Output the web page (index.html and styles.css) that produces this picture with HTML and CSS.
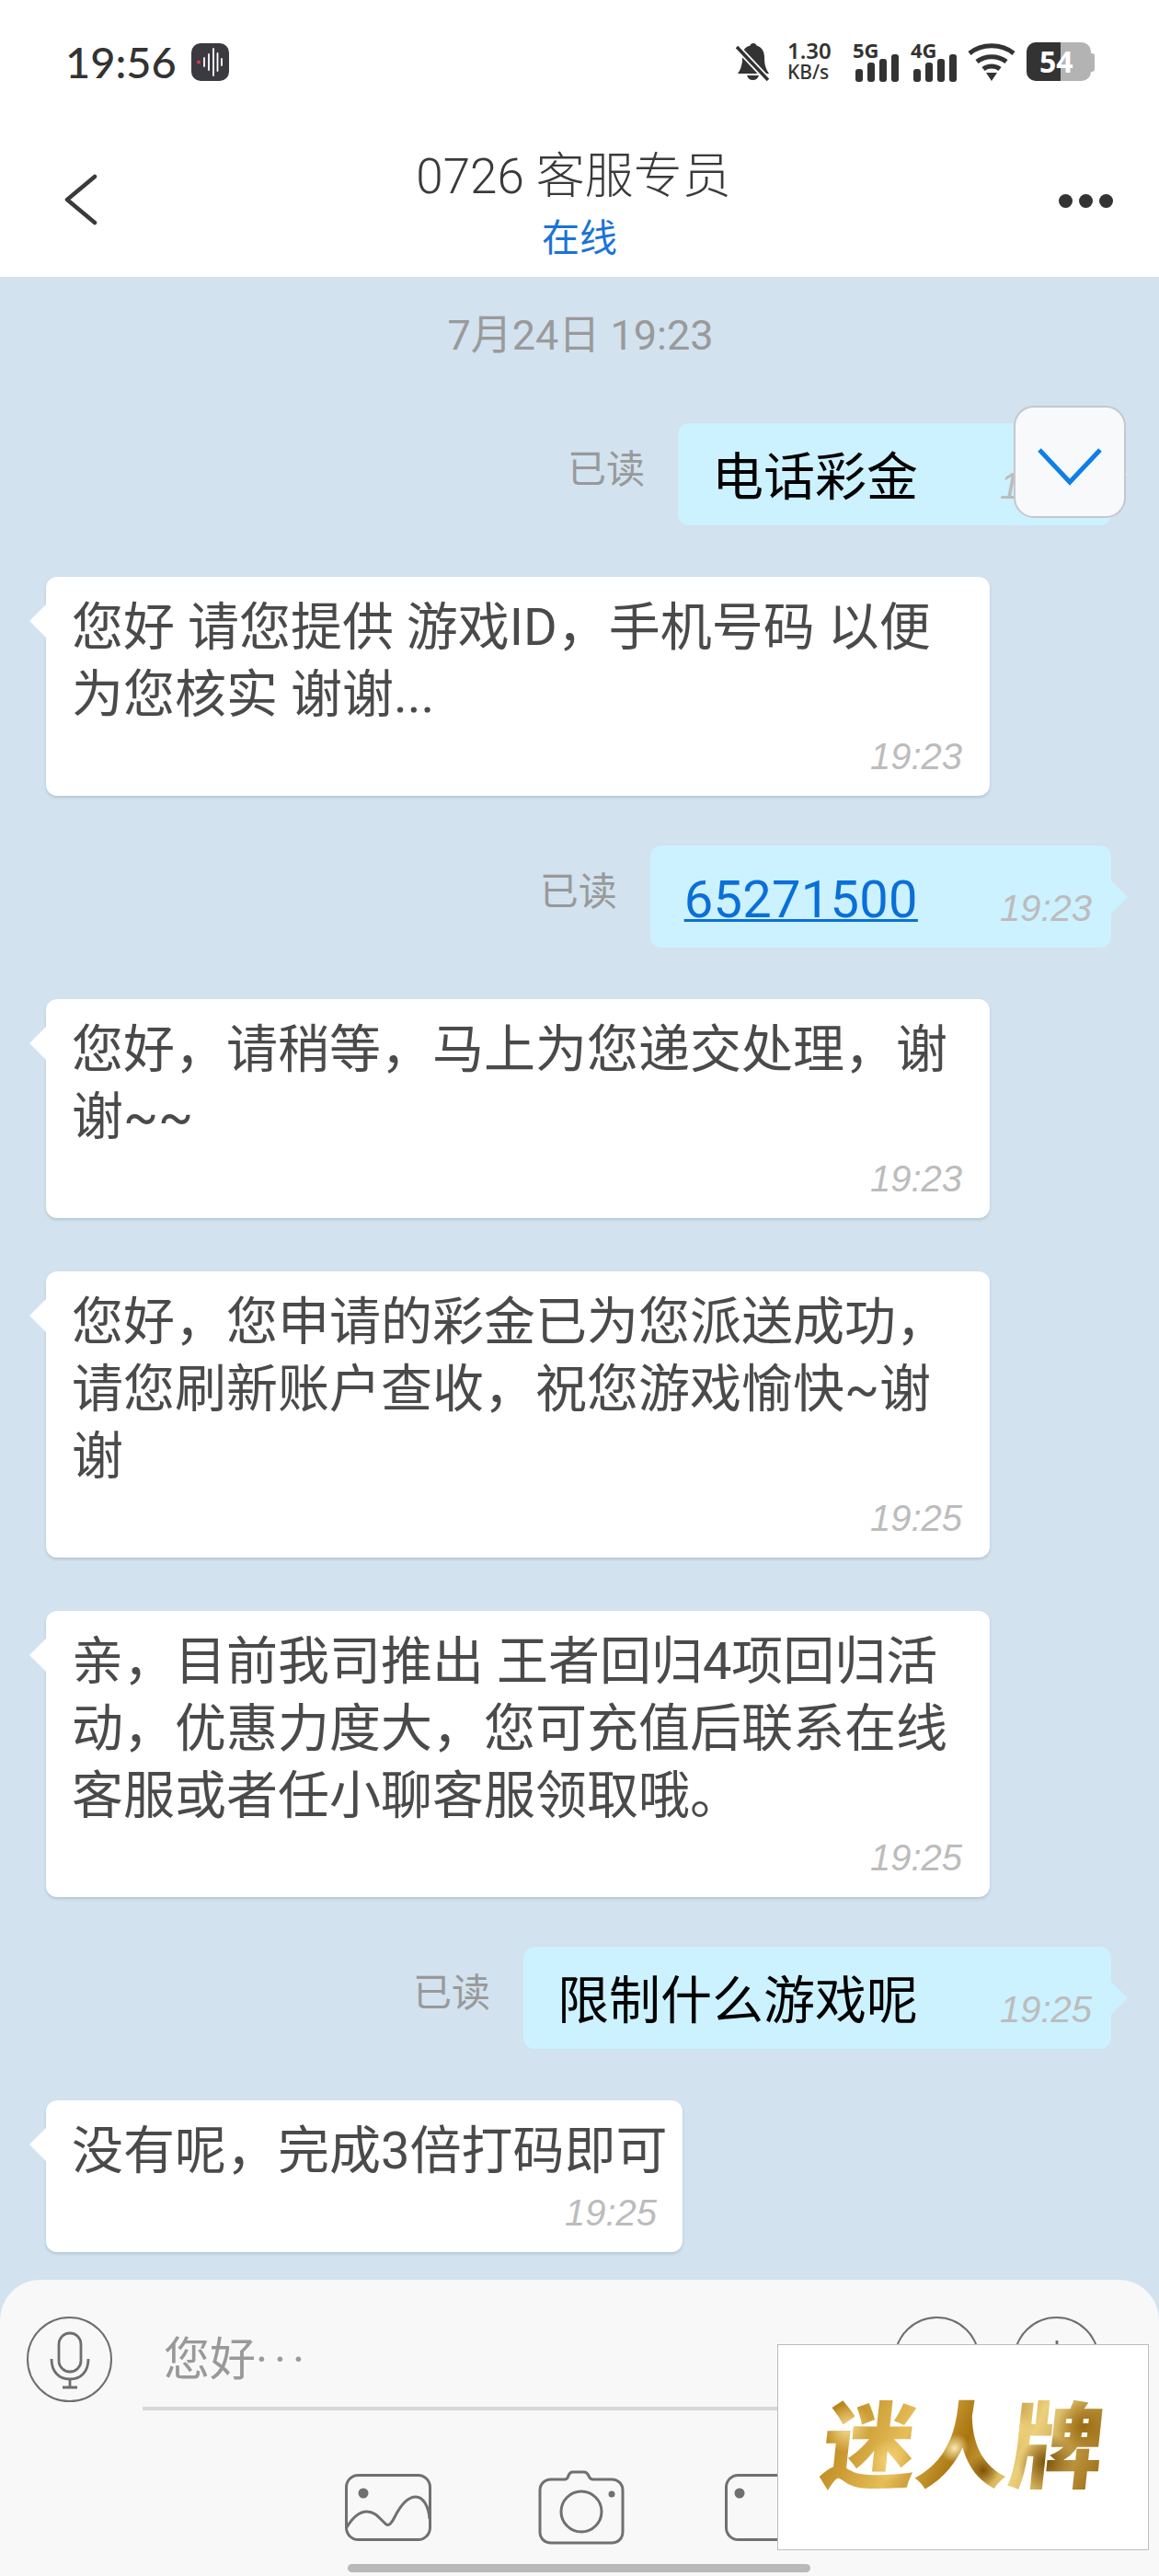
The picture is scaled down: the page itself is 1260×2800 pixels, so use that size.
FILE: index.html
```html
<!doctype html>
<html lang="zh-CN">
<head>
  <meta charset="utf-8" />
  <meta name="viewport" content="width=device-width,initial-scale=1" />
  <title>0726 客服专员</title>
  <link rel="stylesheet" href="styles.css">
</head>
<body>

<div class="status-bar">
  <div class="status-left">
    <span class="clock">19:56</span>
    <span class="rec-badge">
      <svg width="41" height="41" viewBox="0 0 41 41">
        <circle cx="8" cy="20.5" r="2" fill="#e0344f"/>
        <path d="M14 16v9M19 12v17M24 6v29M28.500 11v19M33 17v7" stroke="#fff" stroke-width="1.800" stroke-linecap="round"/>
      </svg>
    </span>
  </div>
  <div class="status-right">
    <svg class="bell" width="37" height="42" viewBox="0 0 37 42">
      <path d="M19 1c2 0 3 1 3.500 2.500C28 5 31 10 31 16c0 7 1 12 5 18H2c3-4 4-8 5-13V15c0-6 3-10 8.500-11.500C16 2 17 1 19 1zM12 36h13c-1 3-3 5-6.500 5S13 39 12 36z" fill="#333"/>
      <path d="M1 5l34 36" stroke="#fff" stroke-width="7"/>
      <path d="M1 5l34 36" stroke="#333" stroke-width="3.500"/>
    </svg>
    <div class="speed"><span>1.30</span><span class="speed-unit">KB/s</span></div>
    <div class="signal">
      <span class="net-label">5G</span>
      <svg width="48" height="30" viewBox="0 0 48 30"><g fill="#333"><rect x="0" y="16" width="8" height="14" rx="3"/><rect x="13" y="9" width="8" height="21" rx="3"/><rect x="26" y="5" width="8" height="25" rx="3"/><rect x="39" y="0" width="8" height="30" rx="3"/></g></svg>
    </div>
    <div class="signal">
      <span class="net-label">4G</span>
      <svg width="48" height="30" viewBox="0 0 48 30"><g fill="#333"><rect x="0" y="16" width="8" height="14" rx="3"/><rect x="13" y="9" width="8" height="21" rx="3"/><rect x="26" y="5" width="8" height="25" rx="3"/><rect x="39" y="0" width="8" height="30" rx="3"/></g></svg>
    </div>
    <svg class="wifi" width="52" height="42" viewBox="0 0 52 42">
      <g fill="none" stroke="#333" stroke-width="5">
        <path d="M2 12C15 1 37 1 50 12"/>
        <path d="M10 21c9-7 23-7 32 0"/>
        <path d="M17 29c5-4 13-4 18 0"/>
      </g>
      <path d="M20 33h12l-6 9z" fill="#333"/>
    </svg>
    <div class="battery"><span class="battery-body"><span class="battery-fill"></span><span class="battery-num">54</span></span></div>
  </div>
</div>

<div class="top-bar">
  <svg class="back" width="36" height="56" viewBox="0 0 36 56">
    <path d="M33 3L3 28l30 25" fill="none" stroke="#3a3a3a" stroke-width="4.500" stroke-linecap="round" stroke-linejoin="round"/>
  </svg>
  <div class="title-wrap">
    <div class="title">0726 客服专员</div>
    <div class="subtitle">在线</div>
  </div>
  <div class="more"><i></i><i></i><i></i></div>
</div>

<div class="chat">
  <div class="date">7月24日 19:23</div>

  <div class="row sent first">
    <span class="read">已读</span>
    <div class="bubble out"><span class="txt">电话彩金</span><span class="time">19:23</span></div>
  </div>

  <div class="bubble in">
    <div class="txt">您好 请您提供 游戏ID，手机号码 以便为您核实 谢谢...</div>
    <div class="time">19:23</div>
  </div>

  <div class="row sent">
    <span class="read">已读</span>
    <div class="bubble out"><a class="txt link">65271500</a><span class="time">19:23</span></div>
  </div>

  <div class="bubble in">
    <div class="txt">您好，请稍等，马上为您递交处理，谢谢~~</div>
    <div class="time">19:23</div>
  </div>

  <div class="bubble in">
    <div class="txt">您好，您申请的彩金已为您派送成功，请您刷新账户查收，祝您游戏愉快~谢谢</div>
    <div class="time">19:25</div>
  </div>

  <div class="bubble in">
    <div class="txt">亲，目前我司推出 王者回归4项回归活动，优惠力度大，您可充值后联系在线客服或者任小聊客服领取哦。</div>
    <div class="time">19:25</div>
  </div>

  <div class="row sent">
    <span class="read">已读</span>
    <div class="bubble out"><span class="txt">限制什么游戏呢</span><span class="time">19:25</span></div>
  </div>

  <div class="bubble in short">
    <div class="txt">没有呢，完成3倍打码即可</div>
    <div class="time">19:25</div>
  </div>

  <button class="scroll-btn">
    <svg width="72" height="42" viewBox="0 0 72 42"><path d="M3 3l33 35L69 3" fill="none" stroke="#0f7fe6" stroke-width="5"/></svg>
  </button>
</div>

<div class="composer">
  <div class="input-row">
    <span class="circle-btn">
      <svg width="60" height="70" viewBox="0 0 60 70">
        <g fill="none" stroke="#6e6e6e" stroke-width="2.800">
          <rect x="18" y="6" width="24" height="42" rx="12"/>
          <path d="M10 34c0 14 8 22 20 22s20-8 20-22"/>
          <path d="M30 56v8M22 65h16"/>
        </g>
      </svg>
    </span>
    <div class="input-box">您好<span class="dots">···</span></div>
    <span class="circle-btn">
      <svg width="60" height="60" viewBox="0 0 60 60"><g fill="#6e6e6e"><circle cx="20" cy="20" r="3"/><circle cx="40" cy="20" r="3"/></g></svg>
    </span>
    <span class="circle-btn">
      <svg width="50" height="50" viewBox="0 0 50 50"><path d="M25 4v42M4 25h42" stroke="#6e6e6e" stroke-width="2.800"/></svg>
    </span>
  </div>
  <div class="tools">
    <svg width="94" height="73" viewBox="0 0 94 73">
      <g fill="none" stroke="#707070" stroke-width="3">
        <rect x="1.500" y="1.500" width="91" height="70" rx="13"/>
        <path d="M2 58c6-10 14-17 22-17 9 0 14 8 21 14 3 2 6-2 9-8 6-12 14-22 23-22 8 0 14 10 15 24"/>
      </g>
      <circle cx="20" cy="21" r="5.500" fill="#707070"/>
    </svg>
    <svg width="94" height="81" viewBox="0 0 94 81">
      <g fill="none" stroke="#707070" stroke-width="3">
        <path d="M14 10h15c2 0 3-1 4-4 1-3 3-4 5-4h12c3 0 4 2 5 4 1 3 2 4 5 4h20c7 0 12 5 12 12v45c0 7-5 12-12 12H14c-7 0-12-5-12-12V22c0-7 5-12 12-12z"/>
        <circle cx="47" cy="45" r="22"/>
      </g>
      <circle cx="80" cy="26" r="3.500" fill="#707070"/>
    </svg>
    <svg class="tool-last" width="94" height="73" viewBox="0 0 94 73">
      <g fill="none" stroke="#707070" stroke-width="3">
        <rect x="1.500" y="1.500" width="91" height="70" rx="13"/>
      </g>
      <circle cx="16" cy="21" r="5.500" fill="#707070"/>
    </svg>
  </div>
  <div class="home-bar"></div>
</div>

<div class="stamp"><span class="stamp-text">迷人牌</span></div>

</body>
</html>
```
FILE: styles.css
```css
*{box-sizing:border-box;}
html,body{margin:0;padding:0;}
body{width:1260px;height:2800px;overflow:hidden;position:relative;display:flex;flex-direction:column;background:#d2e2ef;font-family:Roboto,"Noto Sans CJK SC",sans-serif;color:#333;}

.status-bar{height:134px;background:#fff;display:flex;justify-content:space-between;align-items:flex-start;padding:46px 70px 0 71px;}
.status-left{display:flex;align-items:center;gap:16px;height:42px;}
.clock{font-family:"Lato","Noto Sans",sans-serif;font-size:47px;font-weight:500;color:#333;line-height:42px;}
.rec-badge{width:41px;height:41px;border-radius:10px;background:#3a3a40;display:block;}
.rec-badge svg{display:block;}
.status-right{display:flex;align-items:flex-start;height:42px;}
.bell{display:block;margin-right:19px;}
.speed{width:52px;margin-right:19px;display:flex;flex-direction:column;align-items:flex-start;font-family:"Noto Sans",sans-serif;font-weight:600;font-size:24px;line-height:24px;color:#333;margin-top:-3px;white-space:nowrap;}
.speed-unit{font-size:21px;font-weight:500;line-height:22px;}
.signal{position:relative;width:48px;height:42px;margin-right:15px;}
.signal svg{position:absolute;left:3px;top:13px;}
.net-label{position:absolute;left:0;top:-4px;font-family:"Noto Sans",sans-serif;font-weight:700;font-size:22px;line-height:24px;color:#333;}
.wifi{display:block;margin:0 12px 0 -1px;}
.battery{position:relative;width:74px;height:42px;}
.battery::after{content:"";position:absolute;right:0;top:12px;width:5px;height:20px;background:#b3b3b3;border-radius:0 3px 3px 0;}
.battery-body{position:absolute;left:0;top:0;width:70px;height:42px;background:#b3b3b3;border-radius:10px;overflow:hidden;}
.battery-fill{position:absolute;left:0;top:0;bottom:0;width:37px;background:#333;}
.battery-num{position:absolute;left:14px;top:0;font-family:"Noto Sans",sans-serif;font-weight:700;font-size:32px;line-height:42px;color:#fff;}

.top-bar{height:167px;background:#fff;position:relative;display:flex;justify-content:center;}
.back{position:absolute;left:70px;top:55px;}
.title-wrap{text-align:center;padding-top:28px;margin-left:-3px;}
.title{font-size:53px;line-height:60px;color:#3a3a3a;font-weight:300;padding-right:10px;}
.subtitle{font-size:41px;line-height:50px;color:#1a73d9;margin-top:12px;margin-left:3px;}
.more{position:absolute;left:1151px;top:77px;display:flex;gap:7px;}
.more i{display:block;width:15px;height:15px;border-radius:50%;background:#333;}

.chat{flex:1;position:relative;display:flex;flex-direction:column;align-items:flex-start;padding:0 50px;}
.date{align-self:center;margin-top:33px;margin-left:2px;font-size:45px;line-height:62px;color:#9a9a9a;}
.row{display:flex;align-items:center;justify-content:flex-end;width:1158px;}
.row.first{margin-top:64px;}
.read{font-size:42px;line-height:50px;color:#999;margin-right:36px;margin-top:-10px;}

.bubble{position:relative;border-radius:12px;}
.bubble.in{width:1026px;background:#fff;padding:0 28px;margin-top:58px;box-shadow:0 2px 3px rgba(90,110,130,.25);}
.bubble.in.short{width:692px;padding-right:20px;}
.bubble.in::before{content:"";position:absolute;left:-18px;top:30px;width:0;height:0;border-top:18px solid transparent;border-bottom:18px solid transparent;border-right:18px solid #fff;}
.bubble.in .txt{font-size:56px;line-height:73px;color:#4a4a4a;padding-top:19px;}
.bubble.in.short .txt{white-space:nowrap;}
.bubble.in .time{text-align:right;padding-right:2px;height:73px;line-height:61px;}
.bubble.in.short .time{padding-right:8px;}
.time{font-family:"Liberation Sans",sans-serif;font-style:italic;font-size:40px;color:#bcbcbc;}

.bubble.out{display:flex;align-items:center;height:111px;background:#ccf1ff;padding:0 21px 0 37px;}
.bubble.out::after{content:"";position:absolute;right:-18px;top:38px;width:0;height:0;border-top:18px solid transparent;border-bottom:18px solid transparent;border-left:18px solid #ccf1ff;}
.bubble.out .txt{font-size:56px;line-height:73px;color:#000;margin:8px 89px 0 0;}
.bubble.out .txt.link{color:#0a6fd8;text-decoration:underline;text-decoration-thickness:3px;letter-spacing:.3px;}
.bubble.out .time{margin-top:26px;}
.row.sent + .bubble{margin-top:56px;}
.bubble.in + .row{margin-top:54px;}

.scroll-btn{position:absolute;left:1102px;top:140px;width:122px;height:122px;padding:10px 0 0;border:2px solid #c4c8cc;border-radius:22px;background:#f7f9fa;display:flex;align-items:center;justify-content:center;}

.composer{height:322px;background:#f8f8f8;border-radius:44px 44px 0 0;position:relative;padding:40px 22px 0 29px;}
.input-row{display:flex;align-items:center;height:93px;position:relative;padding-right:43px;}
.circle-btn{width:93px;height:93px;flex:none;border:2.800px solid #6e6e6e;border-radius:50%;display:flex;align-items:center;justify-content:center;}
.input-box{flex:1;height:93px;margin-left:33px;font-size:50px;line-height:94px;color:#999;padding-left:23px;}
.dots{letter-spacing:7px;}
.input-box + .circle-btn{margin-right:37px;}
.input-row::after{content:"";position:absolute;left:126px;right:0;top:98px;height:4px;background:#d8d8d8;}
.tools{display:flex;align-items:center;gap:116px;margin:74px 0 0 346px;height:80px;}
.tools svg{display:block;flex:none;}
.tools .tool-last{margin-left:-7px;}
.home-bar{position:absolute;left:378px;top:309px;width:503px;height:9px;border-radius:5px;background:#b9b9b9;}

.stamp{position:absolute;left:845px;top:2548px;width:404px;height:224px;background:#fff;border:1.500px solid #bdbdbd;display:flex;align-items:center;justify-content:center;}
.stamp-text{font-size:102px;line-height:110px;font-weight:900;transform:skewX(-6deg);color:#b8860b;background:radial-gradient(circle at 8% 30%,#f6dc8e 0,transparent 9%),radial-gradient(circle at 24% 62%,#f2cf72 0,transparent 10%),radial-gradient(circle at 36% 28%,#8a5a08 0,transparent 8%),radial-gradient(circle at 47% 50%,#fbe9b0 0,transparent 9%),radial-gradient(circle at 58% 72%,#7f5206 0,transparent 9%),radial-gradient(circle at 68% 32%,#f4d680 0,transparent 9%),radial-gradient(circle at 80% 64%,#7a4e05 0,transparent 12%),radial-gradient(circle at 92% 28%,#9a6a10 0,transparent 10%),linear-gradient(110deg,#b37c10,#e6bd58 30%,#a8740e 50%,#ecd07c 70%,#94640a);-webkit-background-clip:text;background-clip:text;-webkit-text-fill-color:transparent;margin-top:2px;}
```
